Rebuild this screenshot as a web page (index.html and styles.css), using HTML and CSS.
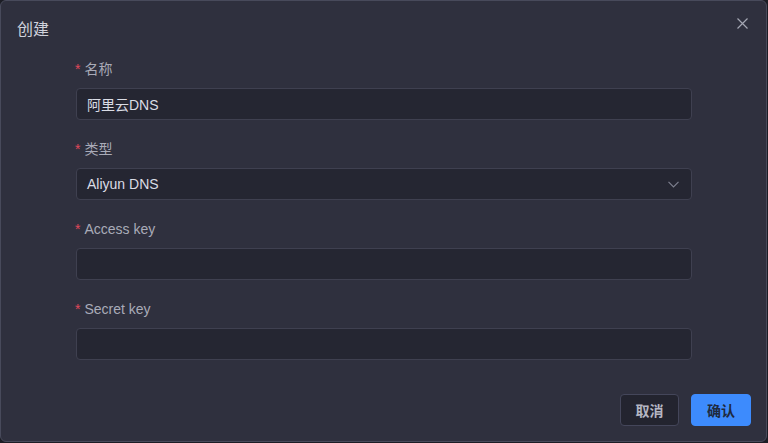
FILE: index.html
```html
<!DOCTYPE html>
<html lang="zh">
<head>
<meta charset="utf-8">
<link rel="stylesheet" href="styles.css">
</head>
<body>
<div class="dialog">
  <div class="header">
    <span class="title">创建</span>
    <button class="close" aria-label="关闭">
      <svg width="11" height="11" viewBox="0 0 11 11"><path d="M0.5 0.5L10.5 10.5M10.5 0.5L0.5 10.5" stroke="#a4a6b3" stroke-width="1.2" fill="none"/></svg>
    </button>
  </div>
  <div class="form">
    <div class="item">
      <label class="label"><span class="req">*</span>名称</label>
      <div class="input"><span class="value">阿里云DNS</span></div>
    </div>
    <div class="item">
      <label class="label"><span class="req">*</span>类型</label>
      <div class="input select"><span class="value">Aliyun DNS</span>
        <svg class="chev" width="11" height="7" viewBox="0 0 11 7"><path d="M0.5 0.8L5.5 5.8L10.5 0.8" stroke="#7d7f8e" stroke-width="1.2" fill="none"/></svg>
      </div>
    </div>
    <div class="item">
      <label class="label"><span class="req">*</span>Access key</label>
      <div class="input"></div>
    </div>
    <div class="item">
      <label class="label"><span class="req">*</span>Secret key</label>
      <div class="input"></div>
    </div>
  </div>
  <div class="footer">
    <button class="btn cancel">取消</button>
    <button class="btn primary">确认</button>
  </div>
</div>
</body>
</html>
```
FILE: styles.css
```css
html, body {
  margin: 0;
  padding: 0;
  background: #1c1d25;
}
body {
  font-family: "Liberation Sans", "Noto Sans CJK SC", sans-serif;
  font-size: 14px;
  color: #c9cbd6;
}
.dialog {
  box-sizing: border-box;
  width: 767px;
  height: 442px;
  background: #2f303e;
  border: 1px solid #484a5b;
  border-radius: 6px;
  display: flex;
  flex-direction: column;
}
.header {
  display: flex;
  justify-content: space-between;
  align-items: flex-start;
  padding: 17px 16px 0 16px;
  height: 24px;
}
.title {
  font-size: 16px;
  line-height: 24px;
  color: #d0d2dc;
}
.close {
  background: none;
  border: none;
  padding: 0;
  width: 11px;
  height: 11px;
  display: flex;
  margin-top: 0;
  margin-right: 2px;
}
.form {
  padding: 15px 74px 0 75px;
  flex: 1;
}
.item {
  display: flex;
  flex-direction: column;
  margin-bottom: 17px;
}
.label {
  line-height: 22px;
  padding-top: 1px;
  margin-bottom: 8px;
  color: #a9abb8;
  display: flex;
  align-items: center;
}
.req {
  color: #e0475a;
  margin-right: 4px;
  margin-left: -1px;
  font-family: "Liberation Sans", sans-serif;
  font-size: 14px;
}
.input {
  box-sizing: border-box;
  height: 32px;
  background: #252632;
  border: 1px solid #3f4050;
  border-radius: 4px;
  padding: 0 10px;
  display: flex;
  align-items: center;
  justify-content: space-between;
}
.value {
  color: #dadce5;
  font-size: 14px;
}
.chev {
  margin-right: 2px;
}
.footer {
  display: flex;
  justify-content: flex-end;
  gap: 12px;
  padding: 0 15px 15px 0;
}
.btn {
  box-sizing: border-box;
  height: 32px;
  border-radius: 4px;
  font-family: "Noto Sans CJK SC", sans-serif;
  font-size: 14px;
  font-weight: 700;
  padding: 0;
  white-space: nowrap;
}
.cancel {
  background: #23242f;
  border: 1px solid #44465a;
  color: #b4b6c3;
  width: 59px;
}
.primary {
  background: #3d8bfd;
  border: 1px solid #3d8bfd;
  color: #1f2a3e;
  width: 60px;
}
```
